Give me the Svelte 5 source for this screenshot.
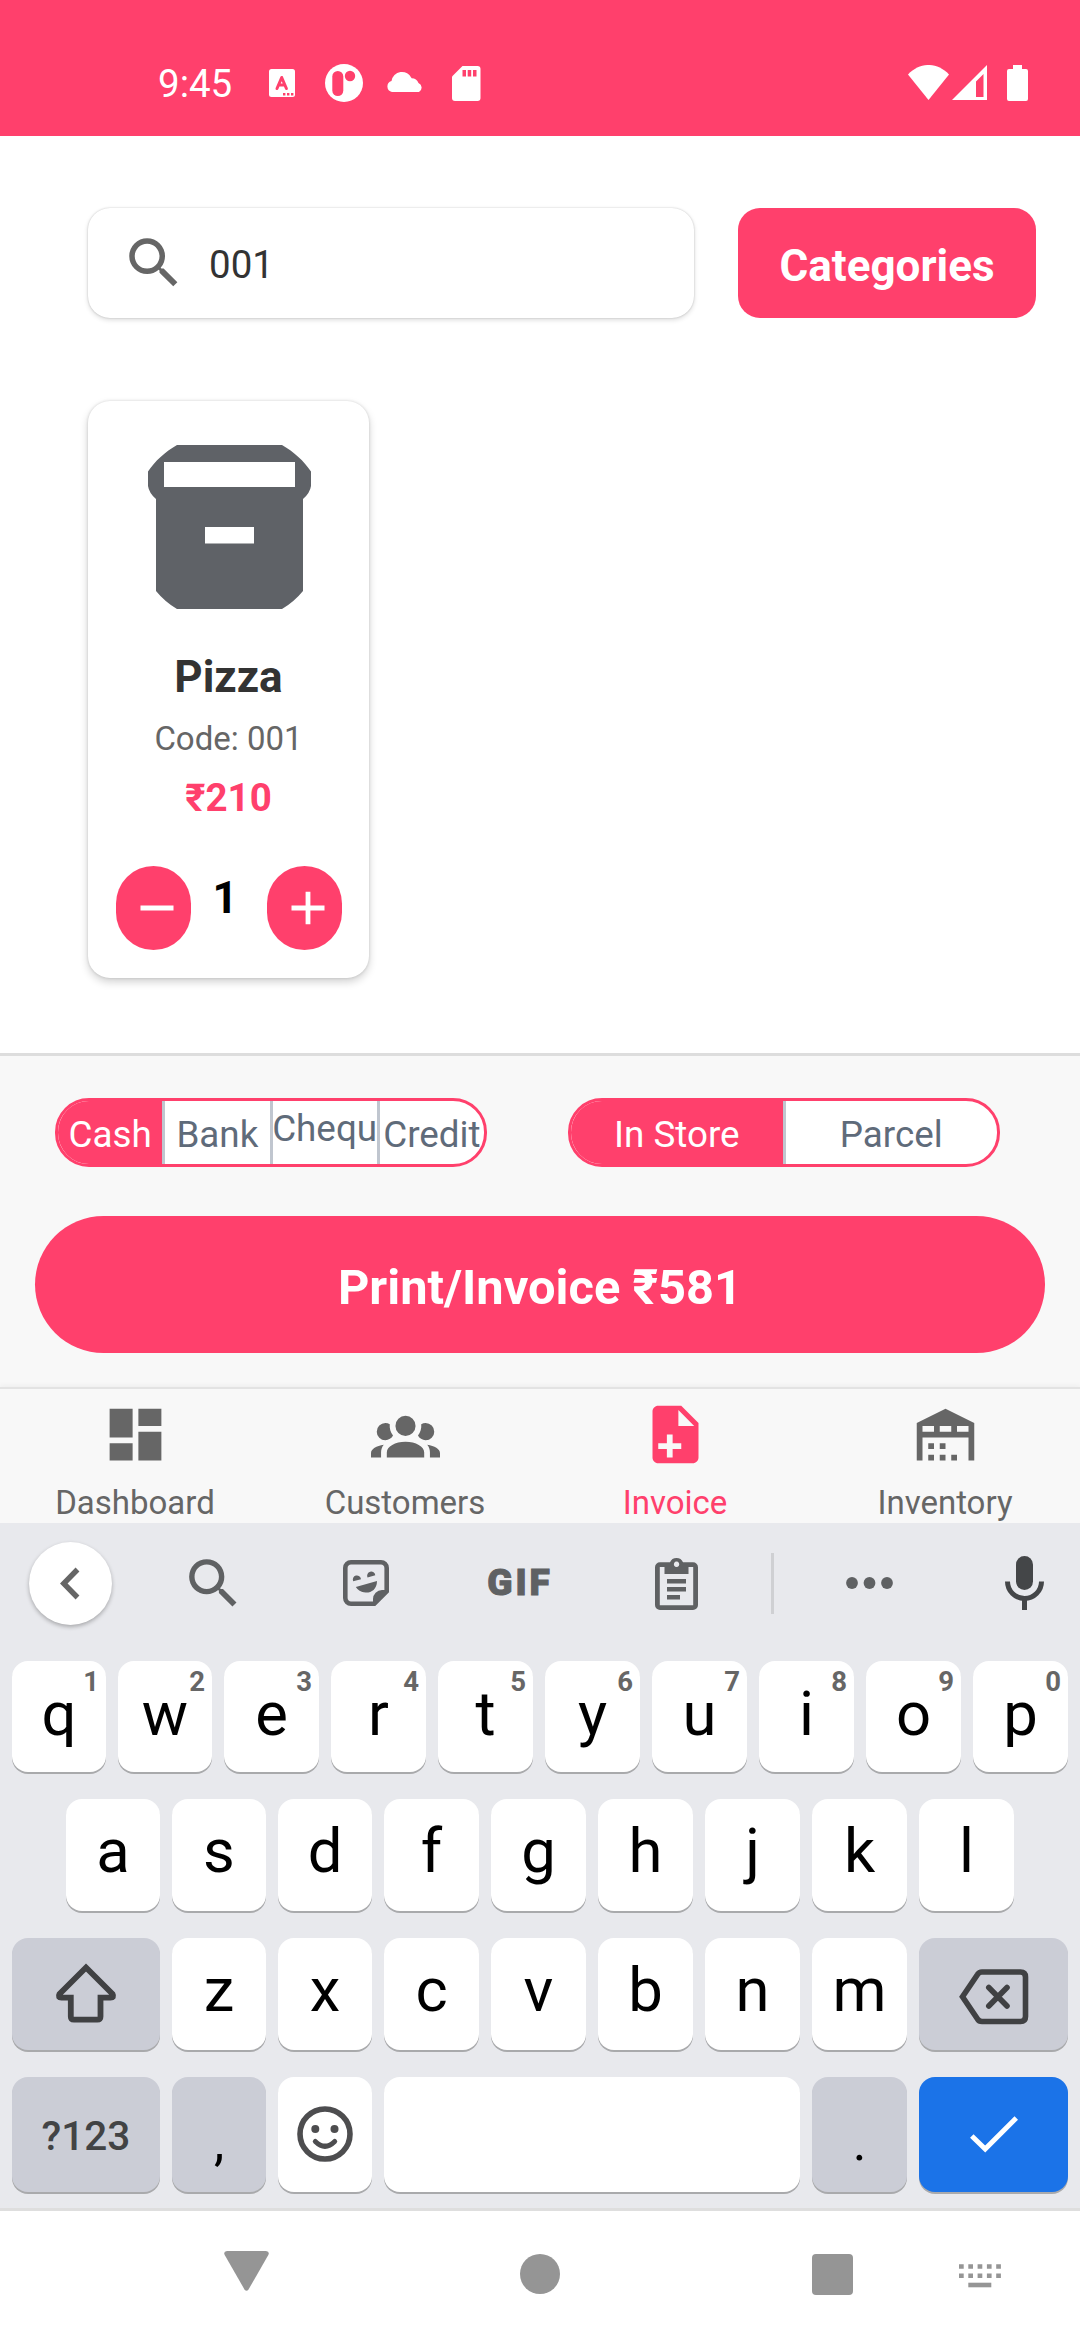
<script>
  const searchPath =
    'M15.5 14h-.79l-.28-.27A6.471 6.471 0 0 0 16 9.5 6.5 6.5 0 1 0 9.5 16c1.61 0 3.09-.59 4.23-1.57l.27.28v.79l5 4.99L20.49 19l-4.99-5zm-6 0C7.01 14 5 11.99 5 9.5S7.01 5 9.5 5 14 7.01 14 9.5 11.99 14 9.5 14z';

  const payments = [
    { label: 'Cash', active: true },
    { label: 'Bank' },
    { label: 'Chequ', raised: true },
    { label: 'Credit' }
  ];
  const channels = [{ label: 'In Store', active: true }, { label: 'Parcel' }];

  const tabs = [
    { label: 'Dashboard', path: 'M3 13h8V3H3v10zm0 8h8v-6H3v6zm10 0h8V11h-8v10zm0-18v6h8V3h-8z' },
    {
      label: 'Customers',
      path: 'M12,5.5A3.5,3.5 0 0,1 15.5,9A3.5,3.5 0 0,1 12,12.5A3.5,3.5 0 0,1 8.5,9A3.5,3.5 0 0,1 12,5.5M5,8C5.56,8 6.08,8.15 6.53,8.42C6.38,9.85 6.8,11.27 7.66,12.38C7.16,13.34 6.16,14 5,14A3,3 0 0,1 2,11A3,3 0 0,1 5,8M19,8A3,3 0 0,1 22,11A3,3 0 0,1 19,14C17.84,14 16.84,13.34 16.34,12.38C17.2,11.27 17.62,9.85 17.47,8.42C17.92,8.15 18.44,8 19,8M5.5,18.25C5.5,16.18 8.41,14.5 12,14.5C15.59,14.5 18.5,16.18 18.5,18.25V20H5.5V18.25M0,20V18.5C0,17.11 1.89,15.94 4.45,15.6C3.86,16.28 3.5,17.22 3.5,18.25V20H0M24,20H20.5V18.25C20.5,17.22 20.14,16.28 19.55,15.6C22.11,15.94 24,17.11 24,18.5V20Z'
    },
    {
      label: 'Invoice',
      active: true,
      path: 'M14 2H6C4.89 2 4 2.89 4 4V20C4 21.11 4.89 22 6 22H18C19.11 22 20 21.11 20 20V8L14 2M13 9V3.5L18.5 9H13M11 15V12H9V15H6V17H9V20H11V17H14V15H11Z'
    },
    {
      label: 'Inventory',
      path: 'M6 19H8V21H6V19M12 3L2 8V21H4V13H20V21H22V8L12 3M8 11H4V9H8V11M14 11H10V9H14V11M20 11H16V9H20V11M6 15H8V17H6V15M10 15H12V17H10V15M10 19H12V21H10V19M14 19H16V21H14V19Z'
    }
  ];

  const rowOne = 'qwertyuiop'.split('');
  const rowTwo = 'asdfghjkl'.split('');
  const rowThree = 'zxcvbnm'.split('');
</script>

<div class="screen">
  <header class="status">
    <div class="status-left">
      <span class="clock">9:45</span>
      <svg width="26" height="28" viewBox="0 0 26 28">
        <rect width="26" height="28" rx="2.5" fill="#fff" />
        <path d="M8 19.5 12.7 8.5 17.4 19.5M9.8 16h6" fill="none" stroke="#ff406c" stroke-width="3" stroke-linecap="round" stroke-linejoin="round" />
        <path d="M14 24h2.4v2.4H14zM18 24h2.4v2.4H18zM22 24h2.4v2.4H22z" fill="#ff406c" />
      </svg>
      <svg class="ic-r" width="38" height="38" viewBox="0 0 38 38">
        <circle cx="19" cy="19" r="19" fill="#fff" />
        <rect x="7.3" y="7" width="11" height="25" rx="5.5" fill="#ff406c" />
        <circle cx="25" cy="12" r="5.2" fill="#ff406c" />
      </svg>
      <svg class="ic-cloud" width="38" height="22" viewBox="0 0 38 22">
        <path d="M6 21A5.6 5.6 0 0 1 5.5 10.100A10.600 10.600 0 0 1 25.700 7.200A7.500 7.500 0 0 1 32.500 12A5 5 0 0 1 33 21Z" fill="#fff" />
      </svg>
      <svg class="ic-sd" width="29" height="35" viewBox="0 0 29 35">
        <path d="M10.500 0H25.500a3 3 0 0 1 3 3V32a3 3 0 0 1-3 3H3a3 3 0 0 1-3-3V10.500Z" fill="#fff" />
        <path d="M10.500 4h3.500v6.500h-3.500zM15.700 4h3.500v6.500h-3.500zM21 4h3.500v6.500H21z" fill="#ff406c" />
      </svg>
    </div>
    <div class="status-right">
      <svg width="41" height="36" viewBox="0 0 41 36"><path d="M0 9.500C12-3.200 29-3.200 41 9.500L20.500 35Z" fill="#fff" /></svg>
      <svg class="ic-signal" width="35" height="36" viewBox="0 0 35 36">
        <path fill-rule="evenodd" d="M35 0V35H0ZM24 16.500V32H31.500V9Z" fill="#fff" />
      </svg>
      <svg class="ic-battery" width="21" height="36" viewBox="0 0 21 36">
        <path d="M6 0h9v4h4a2 2 0 0 1 2 2V34a2 2 0 0 1-2 2H2a2 2 0 0 1-2-2V6a2 2 0 0 1 2-2h4z" fill="#fff" />
      </svg>
    </div>
  </header>

  <main class="content">
    <div class="toolbar">
      <div class="search">
        <svg width="66" height="66" viewBox="0 0 24 24"><path d={searchPath} fill="#666" /></svg>
        <span class="query">001</span>
      </div>
      <button class="categories">Categories</button>
    </div>

    <article class="card">
      <svg class="product" width="163" height="164" viewBox="0 0 163 164">
        <path fill-rule="evenodd" fill="#5f6267" d="M29 0H134C146 7 156 16 163 26.500V41Q162 48 155 54V146Q146 157 134 164H29Q17 157 8 146V54Q1 48 0 41V26.500C7 16 17 7 29 0ZM16 17V42H147V17ZM57 82V98.500H106V82Z" />
      </svg>
      <h2>Pizza</h2>
      <p class="code">Code: 001</p>
      <p class="price">₹210</p>
      <div class="stepper">
        <button class="round" aria-label="Decrease">
          <svg width="34" height="34" viewBox="0 0 34 34"><path d="M.5 17h33" stroke="#fff" stroke-width="4.800" /></svg>
        </button>
        <span class="qty">1</span>
        <button class="round" aria-label="Increase">
          <svg width="34" height="34" viewBox="0 0 34 34"><path d="M.5 17h33M17 .8v32.500" stroke="#fff" stroke-width="4.800" /></svg>
        </button>
      </div>
    </article>
  </main>

  <section class="checkout">
    <div class="segments">
      <div class="segment">
        {#each payments as item}
          <span class="option" class:active={item.active} class:raised={item.raised}>{item.label}</span>
        {/each}
      </div>
      <div class="segment">
        {#each channels as item}
          <span class="option" class:active={item.active}>{item.label}</span>
        {/each}
      </div>
    </div>
    <button class="print">Print/Invoice ₹581</button>
  </section>

  <nav class="tabs">
    {#each tabs as tab}
      <div class="tab" class:active={tab.active}>
        <svg width="69" height="69" viewBox="0 0 24 24"><path d={tab.path} fill="currentColor" fill-rule="evenodd" /></svg>
        <span>{tab.label}</span>
      </div>
    {/each}
  </nav>

  <section class="keyboard">
    <div class="strip">
      <span class="back">
        <svg width="20" height="33" viewBox="0 0 20 33"><path d="M17.500 2.500 3.700 16.500 17.500 30.500" fill="none" stroke="#666" stroke-width="5.400" /></svg>
      </span>
      <svg width="65" height="65" viewBox="0 0 24 24"><path d={searchPath} fill="#5f6163" /></svg>
      <svg width="46" height="46" viewBox="0 0 46 46">
        <path d="M8 2.300H38a5.700 5.700 0 0 1 5.700 5.700V31.300L31.300 43.700H8A5.700 5.700 0 0 1 2.300 38V8A5.700 5.700 0 0 1 8 2.300Z" fill="none" stroke="#5f6163" stroke-width="4.600" />
        <path d="M30 45V39a9 9 0 0 1 9-9h6ZM10.200 21.300a4.100 4.100 0 1 1 7.800-2.100ZM24.500 17.400a4.100 4.100 0 1 1 7.800-2.100ZM12.800 27 34 21C34 30 27.500 33 22.500 32.500 18 32.300 14.500 30 12.800 27Z" fill="#5f6163" />
      </svg>
      <span class="gif">GIF</span>
      <svg width="43" height="53" viewBox="0 0 43 53">
        <path fill-rule="evenodd" fill="#5f6163" d="M5 5.300H15A7 7 0 0 1 28 5.300H38a5 5 0 0 1 5 5V48a5 5 0 0 1-5 5H5a5 5 0 0 1-5-5V10.300a5 5 0 0 1 5-5ZM4.800 10V48.200H38.200V10H33.500V17H9.500V10ZM12 22H31V26.500H12ZM12 30H31V34.500H12ZM12 38H25V42.500H12ZM21.500 4.600a2.700 2.700 0 1 0 .1 0Z" />
      </svg>
      <span class="rule"></span>
      <svg width="47" height="12" viewBox="0 0 47 12" fill="#5f6163">
        <circle cx="6" cy="6" r="5.900" /><circle cx="23.500" cy="6" r="5.900" /><circle cx="41" cy="6" r="5.900" />
      </svg>
      <svg class="mic" width="39" height="54" viewBox="0 0 39 54">
        <rect x="11" y="0" width="17" height="34" rx="8.500" fill="#444648" />
        <path d="M2.500 25.500a17 17 0 0 0 34 0M19.500 42V54" fill="none" stroke="#444648" stroke-width="5" />
      </svg>
    </div>

    <div class="keys row-one">
      {#each rowOne as letter, i}
        <span class="key">{letter}<sup>{(i + 1) % 10}</sup></span>
      {/each}
    </div>
    <div class="keys row-two">
      {#each rowTwo as letter}
        <span class="key">{letter}</span>
      {/each}
    </div>
    <div class="keys row-three">
      <span class="key dark">
        <svg class="shift" width="62" height="60" viewBox="0 0 62 60">
          <path d="M31 4.500 57.500 31Q59.500 34.700 55.500 34.700H45.500V53.500Q45.500 56.700 42.300 56.700H19Q15.800 56.700 15.800 53.500V34.700H6.500Q2.500 34.700 4.500 31Z" fill="none" stroke="#404143" stroke-width="5.800" />
        </svg>
      </span>
      {#each rowThree as letter}
        <span class="key">{letter}</span>
      {/each}
      <span class="key dark">
        <svg class="erase" width="70" height="56" viewBox="0 0 70 56">
          <path d="M23 3H61.500Q66.500 3 66.500 8V47.500Q66.500 52.500 61.500 52.500H23Q20 52.500 18.500 50L3.500 27.700 18.500 5.500Q20 3 23 3ZM29.800 18.500 48 37M48 18.500 29.800 37" fill="none" stroke="#404143" stroke-width="5.600" stroke-linecap="round" />
        </svg>
      </span>
    </div>
    <div class="keys row-four">
      <span class="key dark symbols">?123</span>
      <span class="key dark low">,</span>
      <span class="key">
        <svg width="56" height="56" viewBox="0 0 56 56">
          <circle cx="28" cy="28" r="25" fill="none" stroke="#4d4d4f" stroke-width="5.600" />
          <circle cx="18.300" cy="23" r="4" fill="#4d4d4f" /><circle cx="37.500" cy="23" r="4" fill="#4d4d4f" />
          <path d="M18.300 35.500Q28 45 37.700 35.500" fill="none" stroke="#4d4d4f" stroke-width="5" stroke-linecap="round" />
        </svg>
      </span>
      <span class="key"></span>
      <span class="key dark low">.</span>
      <span class="key enter">
        <svg width="48" height="38" viewBox="0 0 48 38"><path d="M1.800 20 15.200 33 46.300 2" fill="none" stroke="#fff" stroke-width="5" /></svg>
      </span>
    </div>
  </section>

  <footer class="system">
    <svg class="collapse" width="45" height="40" viewBox="0 0 45 40"><path d="M3 0H42Q46 .500 44.300 4L24.500 38.500Q22.500 41 20.500 38.500L.7 4Q-1 .500 3 0Z" fill="#959595" /></svg>
    <span class="home"></span>
    <span class="recents"></span>
    <svg width="42" height="24" viewBox="0 0 42 24">
      <path d="M0 2.500H42M0 11.800H42" stroke="#959595" stroke-width="4.600" stroke-dasharray="4.700 4.600" />
      <path d="M9.300 21H32.300" stroke="#959595" stroke-width="4.600" />
    </svg>
  </footer>
</div>

<style>
  :global(body) {
    margin: 0;
    background: #fff;
  }
  .screen {
    width: 1080px;
    height: 2340px;
    display: flex;
    flex-direction: column;
    overflow: hidden;
    background: #fff;
    font-family: Roboto, 'Liberation Sans', sans-serif;
  }
  .screen * {
    box-sizing: border-box;
  }
  svg {
    display: block;
    flex: none;
  }
  button {
    border: 0;
    padding: 0;
    font-family: inherit;
  }
  h2,
  p {
    margin: 0;
  }

  .status {
    flex: none;
    height: 136px;
    padding: 30px 52px 0 158px;
    background: #ff406c;
    display: flex;
    align-items: center;
    justify-content: space-between;
  }
  .status-left,
  .status-right {
    display: flex;
    align-items: center;
  }
  .clock {
    width: 111px;
    padding-top: 2px;
    font-size: 38.5px;
    line-height: 46px;
    color: #fff;
  }
  .ic-r {
    margin-left: 30px;
  }
  .ic-cloud {
    margin-left: 23px;
    margin-top: -2px;
  }
  .ic-sd {
    margin-left: 28px;
  }
  .ic-signal {
    margin-left: 3px;
  }
  .ic-battery {
    margin-left: 20px;
  }

  .content {
    flex: none;
    height: 917px;
    padding: 72px 44px 0 88px;
  }
  .toolbar {
    display: flex;
    gap: 44px;
    height: 110px;
  }
  .search {
    width: 606px;
    padding-left: 33px;
    display: flex;
    align-items: center;
    border-radius: 22px;
    background: #fff;
    box-shadow:
      0 0 2px rgba(0, 0, 0, 0.2),
      0 2px 5px rgba(0, 0, 0, 0.14);
  }
  .query {
    margin-left: 22px;
    padding-top: 3px;
    font-size: 38.5px;
    color: #333;
  }
  .categories {
    width: 298px;
    padding-top: 6px;
    border-radius: 22px;
    background: #ff406c;
    color: #fff;
    font-size: 44px;
    font-weight: 700;
  }

  .card {
    width: 281px;
    height: 577px;
    margin-top: 83px;
    padding-top: 43.5px;
    display: flex;
    flex-direction: column;
    align-items: center;
    border-radius: 22px;
    background: #fff;
    box-shadow:
      0 0 3px rgba(0, 0, 0, 0.15),
      0 4px 8px rgba(0, 0, 0, 0.18);
  }
  .product {
    margin-left: 2px;
  }
  h2 {
    margin-top: 41.5px;
    font-size: 44px;
    line-height: 54px;
    color: #333;
  }
  .code {
    margin-top: 13px;
    font-size: 33px;
    line-height: 44px;
    color: #666;
  }
  .price {
    margin-top: 13px;
    font-size: 38.5px;
    line-height: 48px;
    font-weight: 700;
    color: #ff406c;
  }
  .stepper {
    width: 226px;
    margin-top: 44px;
    display: flex;
    justify-content: space-between;
  }
  .round {
    width: 75px;
    height: 84px;
    padding-left: 8px;
    border-radius: 38px;
    background: #ff406c;
    display: grid;
    place-items: center;
  }
  .qty {
    margin-right: 7px;
    font-size: 44px;
    line-height: 64px;
    font-weight: 700;
    color: #000;
  }

  .checkout {
    flex: none;
    height: 334px;
    padding: 42px 35px 0;
    border-top: 3px solid #ddd;
    background: #f8f8f8;
  }
  .segments {
    display: flex;
    gap: 81px;
    padding-left: 20px;
  }
  .segment {
    width: 432px;
    height: 69px;
    display: flex;
    overflow: hidden;
    border: 3px solid #ff406c;
    border-radius: 34px;
    background: #fff;
  }
  .option {
    flex: 1 1 0;
    min-width: 0;
    display: flex;
    justify-content: center;
    padding-top: 2px;
    font-size: 36.8px;
    line-height: 63px;
    color: #5f6b7a;
    white-space: nowrap;
  }
  .option + .option {
    border-left: 3px solid #c0c6cf;
  }
  .option.active {
    background: #ff406c;
    color: #fff;
  }
  .option.raised {
    padding-top: 0;
    line-height: 56px;
  }
  .print {
    display: block;
    width: 1010px;
    height: 137px;
    margin-top: 49px;
    padding-top: 6px;
    border-radius: 69px;
    background: #ff406c;
    color: #fff;
    font-size: 48.8px;
    font-weight: 700;
  }

  .tabs {
    flex: none;
    height: 136px;
    display: grid;
    grid-template-columns: repeat(4, 1fr);
    border-top: 2px solid #e3e3e3;
    background: #f8f8f8;
    box-shadow: 0 -2px 5px rgba(0, 0, 0, 0.04);
  }
  .tab {
    padding-top: 10.5px;
    display: flex;
    flex-direction: column;
    align-items: center;
    font-size: 33px;
    line-height: 40px;
    color: #666;
  }
  .tab span {
    margin-top: 14.5px;
  }
  .tab.active {
    color: #ff406c;
  }

  .keyboard {
    flex: none;
    height: 688px;
    border-bottom: 3px solid #dedede;
    background: #e8e9ed;
  }
  .strip {
    height: 138px;
    padding-bottom: 18px;
    display: grid;
    grid-template-columns: 140px 146px 160px 148px 165px 27px 167px 127px;
    align-items: center;
    justify-items: center;
  }
  .back {
    width: 83px;
    height: 83px;
    padding-right: 1px;
    display: grid;
    place-items: center;
    border-radius: 50%;
    background: #fff;
    box-shadow: 0 2px 4px rgba(0, 0, 0, 0.28);
  }
  .gif {
    font-size: 37px;
    line-height: 40px;
    font-weight: 900;
    letter-spacing: 3px;
    color: #5f6163;
    -webkit-text-stroke: 1px #5f6163;
  }
  .rule {
    width: 3px;
    height: 61px;
    background: #cfd0d3;
  }
  .mic {
    margin-left: 15px;
  }
  .keys {
    display: grid;
    column-gap: 12px;
    padding: 0 12px;
    margin-bottom: 27px;
  }
  .row-one {
    height: 111px;
    grid-template-columns: repeat(2, 94px) repeat(8, 95px);
  }
  .row-two {
    height: 112px;
    padding: 0 66px;
    grid-template-columns: repeat(3, 94px) repeat(6, 95px);
  }
  .row-three {
    height: 112px;
    grid-template-columns: 148px repeat(2, 94px) repeat(5, 95px) 149px;
  }
  .row-four {
    height: 115px;
    margin-bottom: 0;
    grid-template-columns: 148px 94px 94px 416px 95px 149px;
  }
  .key {
    position: relative;
    display: flex;
    align-items: center;
    justify-content: center;
    padding-bottom: 5px;
    border-radius: 16px;
    background: #fff;
    box-shadow: 0 2px 0 #a9aaac;
    color: #000;
    font-size: 61.6px;
    line-height: 72px;
  }
  .key sup {
    position: absolute;
    top: 4px;
    right: 7px;
    font-size: 27.5px;
    line-height: 34px;
    font-weight: 700;
    color: #666;
  }
  .row-two .key,
  .row-three .key {
    padding-bottom: 8px;
  }
  .row-four .key {
    padding-bottom: 2px;
  }
  .key.dark {
    background: #cbcdd6;
  }
  .row-four .key.enter {
    padding-bottom: 0;
    background: #1b73e8;
  }
  .row-four .key.low {
    padding: 16px 0 0;
    font-size: 52px;
  }
  .row-four .key.symbols {
    padding: 3px 0 0;
    font-size: 40.5px;
    font-weight: 500;
    color: #424345;
  }
  .shift {
    margin-bottom: -5px;
  }
  .erase {
    margin-bottom: -13px;
  }

  .system {
    flex: none;
    height: 129px;
    display: flex;
    align-items: center;
    padding-left: 224px;
  }
  .collapse {
    margin-bottom: 10px;
  }
  .home {
    width: 40px;
    height: 40px;
    margin-left: 251px;
    margin-bottom: 3px;
    border-radius: 50%;
    background: #959595;
  }
  .recents {
    width: 41px;
    height: 41px;
    margin: 0 106px 2px 252px;
    border-radius: 4px;
    background: #959595;
  }
</style>
